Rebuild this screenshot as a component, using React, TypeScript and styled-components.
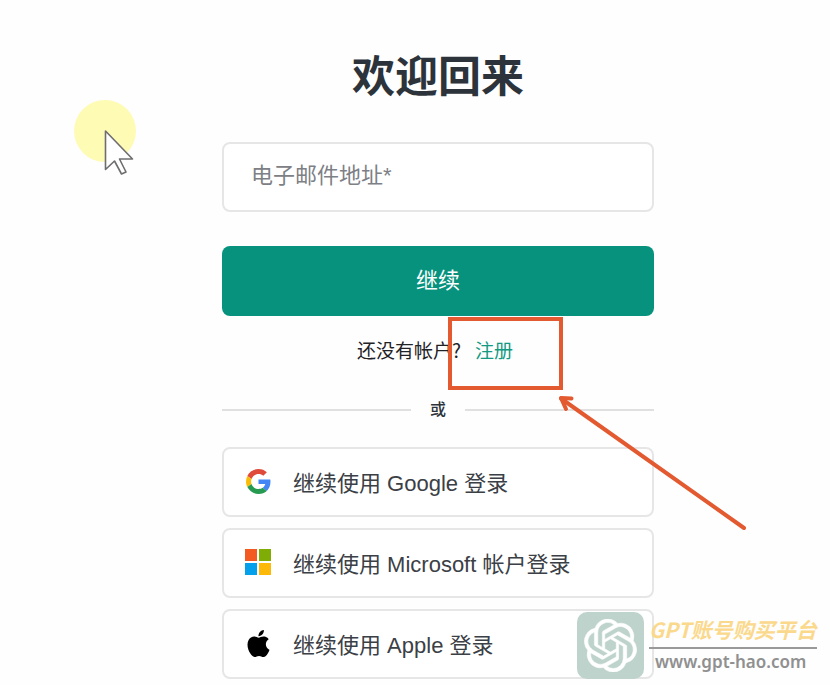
import React from "react";
import styled, { createGlobalStyle, css } from "styled-components";
import { SiApple, SiOpenai } from "react-icons/si";

const GlobalStyle = createGlobalStyle`
  *, *::before, *::after { box-sizing: border-box; }
  body {
    margin: 0;
    background: #fefefe;
    color: #2d333a;
    font-family: "Liberation Sans", "Noto Sans CJK SC", sans-serif;
  }
`;

const Page = styled.main`
  display: flex;
  justify-content: center;
  padding: 40px 0 6px 46px;
  overflow: hidden;
`;

const Column = styled.div`
  position: relative;
  width: 52vw;
  min-width: 432px;
  max-width: 480px;
`;

const Title = styled.h1`
  margin: 0 0 36px;
  font-family: "Noto Sans CJK SC", sans-serif;
  font-size: 43px;
  font-weight: 700;
  line-height: 66px;
  text-align: center;
`;

const Form = styled.form`
  display: flex;
  flex-direction: column;
  gap: 34px;
`;

const box = css`
  width: 100%;
  height: 70px;
  border-radius: 8px;
  font-family: inherit;
  font-size: 22px;
`;

const EmailInput = styled.input`
  ${box}
  display: block;
  padding: 0 27px 2px;
  border: 2px solid #e6e6e7;
  background: #fff;
  color: #2d333a;
  &::placeholder {
    color: #7d8085;
    opacity: 1;
  }
`;

const SubmitButton = styled.button`
  ${box}
  padding: 0 0 6px;
  border: 0;
  background: #07927e;
  color: #fff;
  cursor: pointer;
`;

const SignUp = styled.p`
  display: flex;
  justify-content: center;
  gap: 14px;
  margin: 20px 0 0;
  padding-right: 6px;
  font-family: "Noto Sans CJK SC", sans-serif;
  font-size: 19px;
  line-height: 28px;
  color: #1f2226;
`;

const SignUpLink = styled.a`
  color: #129a83;
  text-decoration: none;
`;

const Divider = styled.div`
  display: flex;
  align-items: center;
  gap: 19px;
  margin: 34px 0 25px;
  font-size: 16px;
  line-height: 24px;
  font-weight: 500;
  &::before, &::after {
    content: "";
    flex: 1;
    height: 2px;
    background: #e0e0e0;
  }
`;

const Providers = styled.div`
  display: flex;
  flex-direction: column;
  gap: 11px;
`;

const ProviderButton = styled.button`
  ${box}
  display: flex;
  align-items: center;
  gap: 21px;
  padding: 0 20px 2px;
  border: 2px solid #e6e6e7;
  background: #fff;
  color: #3b4046;
  text-align: left;
  cursor: pointer;
`;

const IconSlot = styled.span`
  display: flex;
  justify-content: center;
  width: 28px;
`;

const Highlight = styled.div`
  position: absolute;
  top: 277px;
  left: calc(50% + 10px);
  width: 115px;
  height: 73px;
  border: 4px solid #e35930;
  pointer-events: none;
`;

const Arrow = styled.svg`
  position: absolute;
  top: 350px;
  left: calc(50% + 115px);
  pointer-events: none;
`;

const Pointer = styled.svg`
  position: absolute;
  top: 54px;
  left: -154px;
  pointer-events: none;
`;

const Watermark = styled.aside`
  position: absolute;
  bottom: 0;
  left: calc(50% + 139px);
  display: flex;
  align-items: center;
  gap: 5px;
  pointer-events: none;
`;

const WatermarkLogo = styled.div`
  display: grid;
  place-items: center;
  width: 67px;
  height: 67px;
  border-radius: 10px;
  background: #bdd3cb;
  color: #fff;
`;

const WatermarkText = styled.div`
  display: flex;
  flex-direction: column;
  white-space: nowrap;
`;

const WatermarkName = styled.strong`
  padding: 0 0 3px;
  border-bottom: 2px solid #999;
  font-family: "Noto Sans CJK SC", sans-serif;
  font-size: 21px;
  font-style: italic;
  line-height: 30px;
  color: #fbd98c;
`;

const WatermarkSite = styled.span`
  padding: 0 0 2px 6px;
  font-family: "Noto Sans", sans-serif;
  font-size: 17px;
  font-weight: 600;
  line-height: 26px;
  color: #909090;
`;

function GoogleIcon() {
  return (
    <svg width="25" height="25" viewBox="0 0 48 48" aria-hidden="true">
      <path fill="#e04a3a" d="M24 9.5c3.54 0 6.71 1.22 9.21 3.6l6.85-6.85C35.9 2.38 30.47 0 24 0 14.62 0 6.51 5.38 2.56 13.22l7.98 6.19C12.43 13.72 17.74 9.5 24 9.5z" />
      <path fill="#4285f4" d="M46.98 24.55c0-1.57-.15-3.09-.38-4.55H24v9.02h12.94c-.58 2.96-2.26 5.48-4.78 7.18l7.73 6c4.51-4.18 7.09-10.36 7.09-17.65z" />
      <path fill="#fbbc05" d="M10.53 28.59c-.48-1.45-.76-2.99-.76-4.59s.27-3.14.76-4.59l-7.98-6.19C.92 16.46 0 20.12 0 24c0 3.88.92 7.54 2.56 10.78l7.97-6.19z" />
      <path fill="#259a50" d="M24 48c6.48 0 11.93-2.13 15.89-5.81l-7.73-6c-2.15 1.45-4.92 2.3-8.16 2.3-6.26 0-11.57-4.22-13.47-9.91l-7.98 6.19C6.51 42.62 14.62 48 24 48z" />
    </svg>
  );
}

function MicrosoftIcon() {
  return (
    <svg width="26" height="26" viewBox="0 0 26 26" aria-hidden="true">
      <rect width="12" height="12" fill="#f35a22" />
      <rect x="14" width="12" height="12" fill="#7fac05" />
      <rect y="14" width="12" height="12" fill="#05a0ec" />
      <rect x="14" y="14" width="12" height="12" fill="#fdb90a" />
    </svg>
  );
}

const providers = [
  { label: "继续使用 Google 登录", icon: <GoogleIcon /> },
  { label: "继续使用 Microsoft 帐户登录", icon: <MicrosoftIcon /> },
  { label: "继续使用 Apple 登录", icon: <SiApple size={27} color="#000" aria-hidden /> },
];

export default function App() {
  return (
    <>
      <GlobalStyle />
      <Page>
        <Column>
          <Title>欢迎回来</Title>
          <Form onSubmit={(event: React.FormEvent) => event.preventDefault()}>
            <EmailInput type="email" aria-label="电子邮件地址" placeholder="电子邮件地址*" />
            <SubmitButton type="submit">继续</SubmitButton>
          </Form>
          <SignUp>
            还没有帐户?
            <SignUpLink href="#signup">注册</SignUpLink>
          </SignUp>
          <Divider>或</Divider>
          <Providers>
            {providers.map(({ label, icon }) => (
              <ProviderButton key={label} type="button">
                <IconSlot>{icon}</IconSlot>
                {label}
              </ProviderButton>
            ))}
          </Providers>

          <Highlight />
          <Arrow width="200" height="145" viewBox="0 0 200 145" fill="none" stroke="#e35930" strokeWidth="4" strokeLinecap="round" strokeLinejoin="round" aria-hidden="true">
            <path d="M8 8.500 191 138" />
            <path d="M18.500 8.500 8 8l5 11" />
          </Arrow>
          <Pointer width="70" height="90" viewBox="0 0 70 90" aria-hidden="true">
            <circle cx="37" cy="37" r="31" fill="#fefbb4" />
            <path d="M37.500 37V75.500L46.500 67 53.500 80 58 78 51.500 65H64.500Z" fill="#fff" stroke="#6f6d70" strokeWidth="1.600" strokeLinejoin="round" />
          </Pointer>
          <Watermark>
            <WatermarkLogo>
              <SiOpenai size={53} stroke="#fff" strokeWidth={0.25} aria-hidden />
            </WatermarkLogo>
            <WatermarkText>
              <WatermarkName>GPT账号购买平台</WatermarkName>
              <WatermarkSite>www.gpt-hao.com</WatermarkSite>
            </WatermarkText>
          </Watermark>
        </Column>
      </Page>
    </>
  );
}
